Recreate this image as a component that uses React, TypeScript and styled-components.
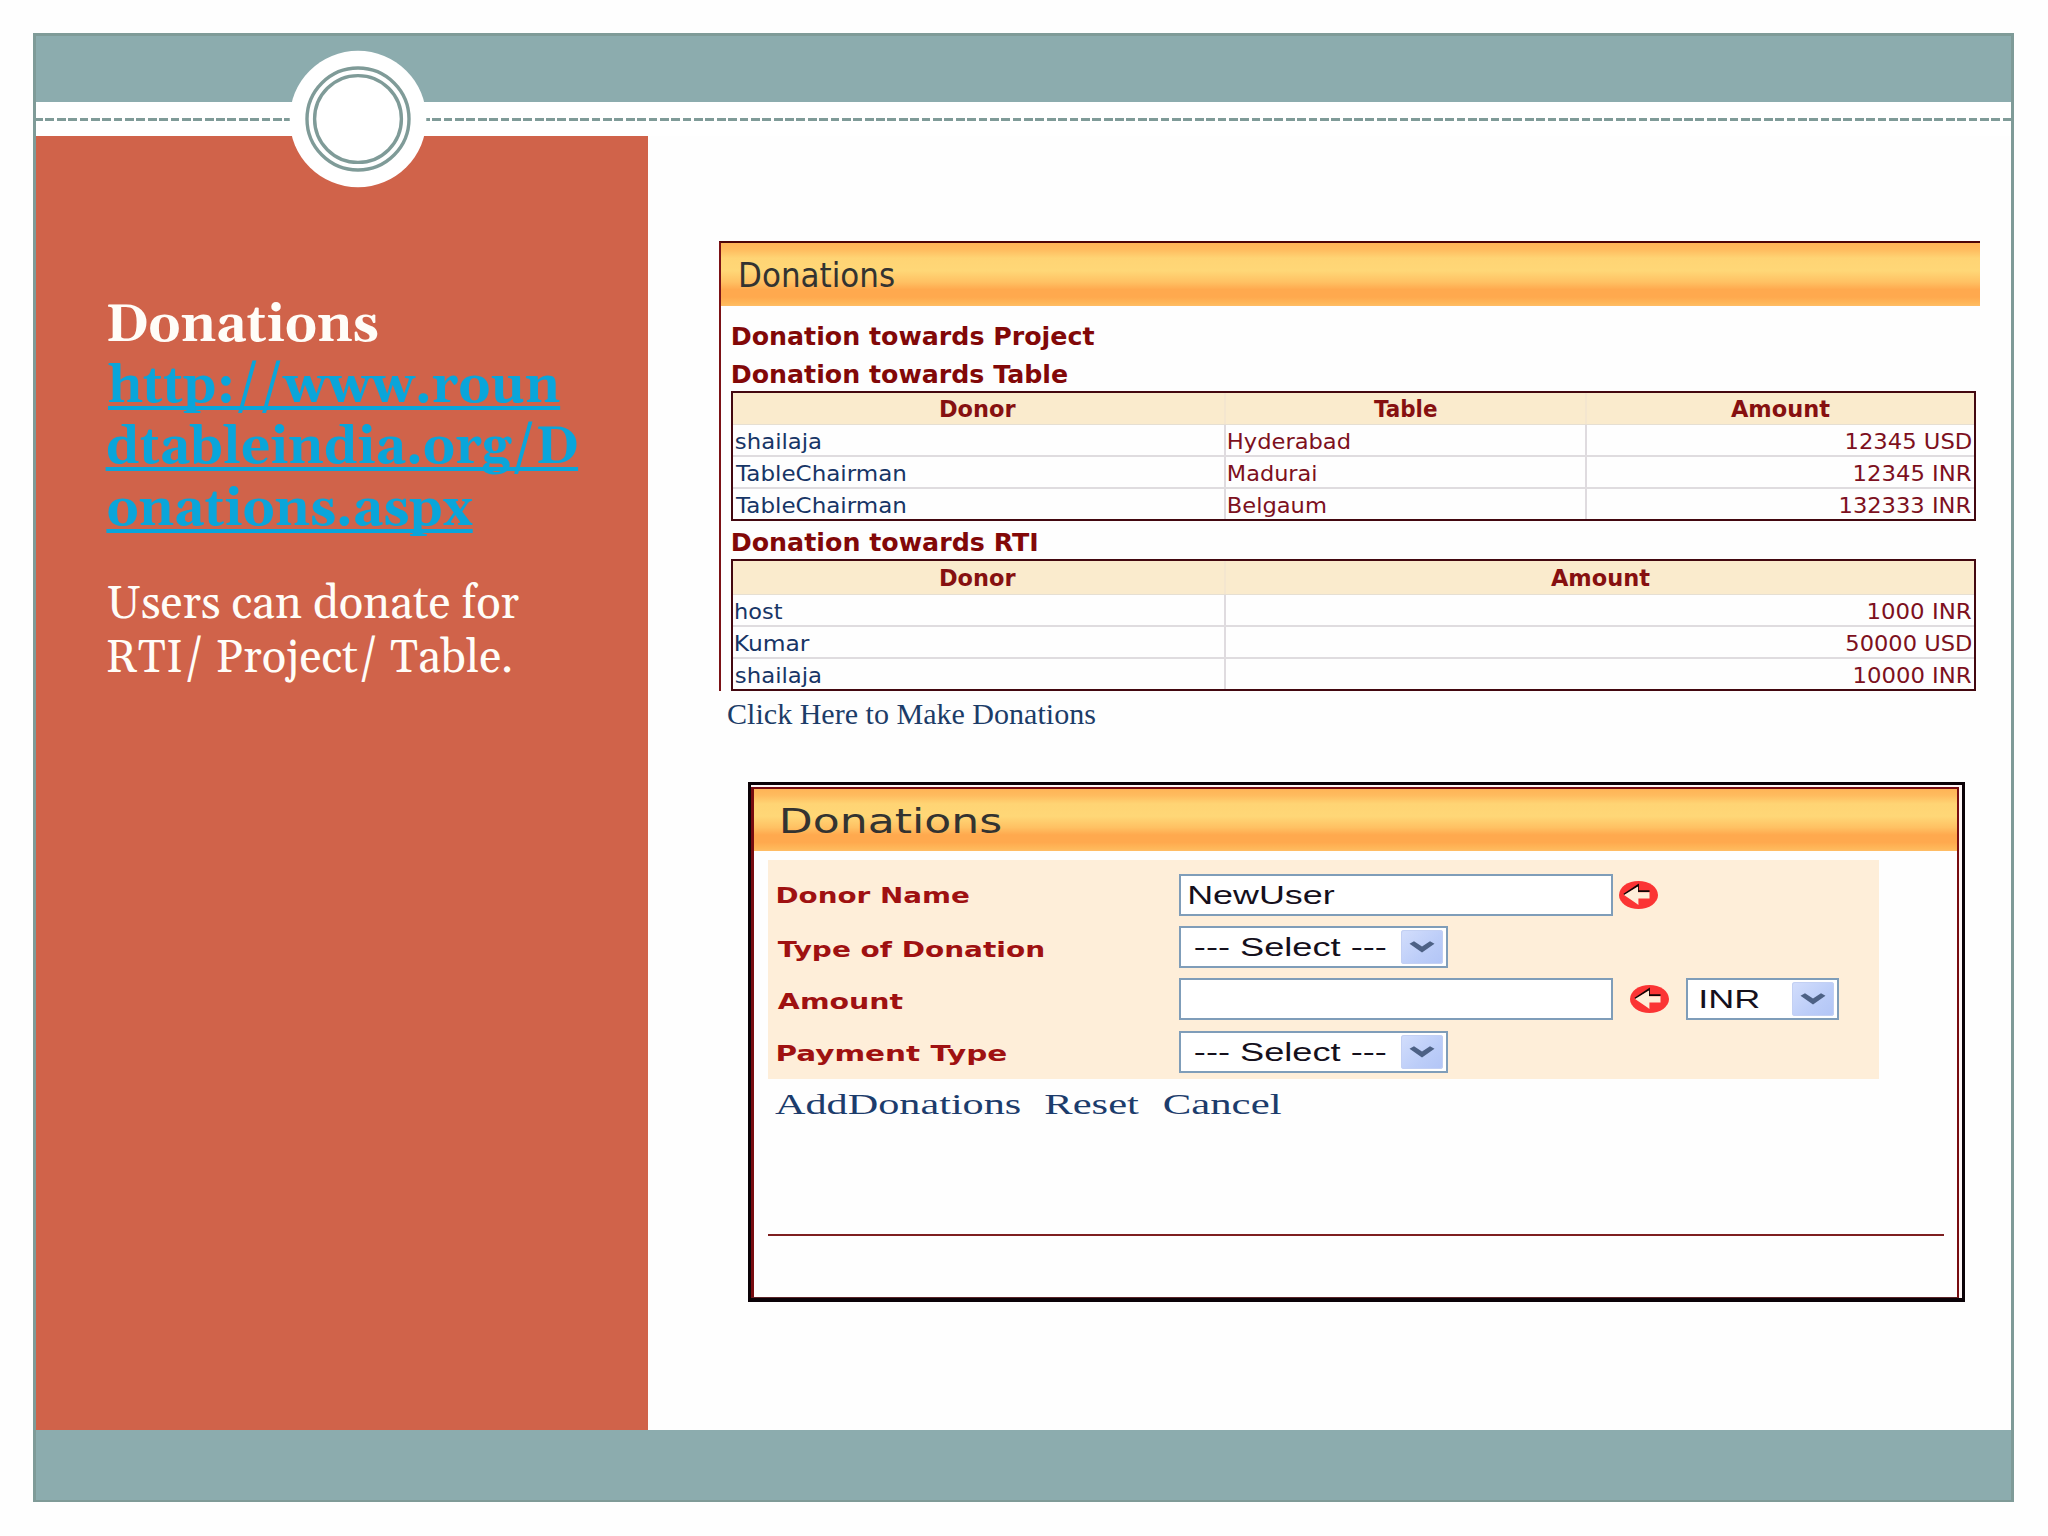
import React, { useLayoutEffect, useState } from "react";
import styled, { createGlobalStyle, css } from "styled-components";

const SANS = '"DejaVu Sans", Verdana, sans-serif';
const ARIAL = '"Liberation Sans", Arial, sans-serif';
const SERIF = '"Liberation Serif", "Times New Roman", serif';
const BOOK = 'Gelasio, "Liberation Serif", Georgia, serif';

const GlobalStyle = createGlobalStyle`
  *, *::before, *::after { box-sizing: border-box; }
  body { margin: 0; background: #fefefe; }
`;

/* ---------- text fitted to a given ink width ---------- */

const FitBox = styled.span<{ $w: number }>`
  display: block;
  flex: none;
  width: ${(p) => p.$w}px;
  white-space: pre;
`;

const FitInk = styled.span<{
  $font: string;
  $size: number;
  $bold?: boolean;
  $lh: number;
  $line?: boolean;
}>`
  display: inline-block;
  vertical-align: top;
  transform-origin: 0 50%;
  font-family: ${(p) => p.$font};
  font-size: ${(p) => p.$size}px;
  font-weight: ${(p) => (p.$bold ? 700 : 400)};
  line-height: ${(p) => p.$lh}px;
  ${(p) =>
    p.$line &&
    css`
      text-decoration: underline;
      text-decoration-thickness: 4px;
      text-underline-offset: 4px;
      text-decoration-skip-ink: none;
    `}
`;

type FitProps = {
  children: string;
  w: number;
  size: number;
  font?: string;
  bold?: boolean;
  lh?: number;
  line?: boolean;
};

/* measuring at ten times the size keeps the ink bounds free of rounding */
const ZOOM = 10;

function Fit({ children, w, size, font = SANS, bold, lh = 30, line }: FitProps) {
  const [t, setT] = useState("none");
  useLayoutEffect(() => {
    const ctx = document.createElement("canvas").getContext("2d");
    if (!ctx) return;
    ctx.font = `${bold ? 700 : 400} ${size * ZOOM}px ${font}`;
    const m = ctx.measureText(children);
    const left = m.actualBoundingBoxLeft / ZOOM;
    const right = m.actualBoundingBoxRight / ZOOM;
    const k = w / (left + right);
    setT(`translateX(${left * k}px) scaleX(${k})`);
  }, [children, w, size, font, bold]);
  return (
    <FitBox $w={w}>
      <FitInk $font={font} $size={size} $bold={bold} $lh={lh} $line={line} style={{ transform: t }}>
        {children}
      </FitInk>
    </FitBox>
  );
}

/* ---------- slide ---------- */

const Slide = styled.main`
  width: 2048px;
  height: 1536px;
  padding: 33px 34px 34px 33px;
  background: #fefefe;
  overflow: hidden;
`;

const Frame = styled.div`
  position: relative;
  display: flex;
  flex-direction: column;
  width: 1981px;
  height: 1469px;
  border: 3px solid #7f9b98;
  border-bottom-width: 2px;
`;

const Band = styled.div<{ $h: number }>`
  flex: none;
  height: ${(p) => p.$h}px;
  background: #8cacae;
`;

const Strip = styled.div`
  flex: none;
  display: flex;
  align-items: center;
  height: 34px;
  background: #fff;
`;

const Dashes = styled.div`
  width: 100%;
  height: 3px;
  margin-top: 1px;
  background: repeating-linear-gradient(90deg, #7f9b98 0 8.8px, #fff 8.8px 11.38px);
  background-position-x: -2px;
`;

const Medallion = styled.svg`
  position: absolute;
  left: 252.3px;
  top: 13.3px;
  width: 140px;
  height: 140px;
`;

const Body = styled.div`
  flex: 1;
  display: flex;
  min-height: 0;
`;

const Sidebar = styled.aside`
  flex: none;
  width: 612px;
  padding: 158.5px 0 0 71.5px;
  background: #d0634a;
  color: #fffdf8;
`;

const Title = styled.h1`
  margin: 0 0 37.5px;
`;

const TitleLink = styled.a`
  display: block;
  color: #0aa5da;
`;

const Copy = styled.p`
  margin: 0;
`;

const Content = styled.section`
  flex: 1;
  display: flex;
  flex-direction: column;
  padding: 105px 0 0 71px;
`;

/* ---------- shared panel parts ---------- */

const PanelHeader = styled.header<{ $h: number; $pad: number }>`
  flex: none;
  display: flex;
  align-items: center;
  height: ${(p) => p.$h}px;
  padding: 2px 0 0 ${(p) => p.$pad}px;
  color: #333331;
  background: linear-gradient(
    180deg,
    #ffb456 0%,
    #ffbb5e 10%,
    #ffd474 24%,
    #ffd777 44%,
    #ffc163 62%,
    #ffa94e 74%,
    #ffa94e 86%,
    #ffb85a 96%,
    #ffbd66 100%
  );
`;

/* ---------- listing panel ---------- */

const Listing = styled.div`
  flex: none;
  width: 1261px;
  height: 450px;
  border-top: 2px solid #4d0508;
  border-left: 2px solid #7b1216;
`;

const Lists = styled.div`
  padding: 14px 4px 0 10px;
`;

const Heading = styled.h2<{ $mt?: number; $h?: number; $pt?: number }>`
  margin: ${(p) => p.$mt ?? 0}px 0 0 1.5px;
  padding-top: ${(p) => p.$pt ?? 1}px;
  height: ${(p) => p.$h ?? 33}px;
  color: #820808;
`;

const Grid = styled.div`
  border: 2px solid #430810;
  width: 1245px;
`;

const Row = styled.div<{ $cols: string; $h: number; $head?: boolean }>`
  display: grid;
  grid-template-columns: ${(p) => p.$cols};
  height: ${(p) => p.$h}px;
  background: ${(p) => (p.$head ? "#faebcd" : "transparent")};
  border-bottom: ${(p) => (p.$head ? "1px solid #e6dfd2" : "2px solid #dfdcdf")};
  &:last-child {
    border-bottom: 0;
  }
`;

const Cell = styled.div<{ $align?: string; $tone?: string; $head?: boolean }>`
  display: flex;
  align-items: center;
  justify-content: ${(p) => p.$align ?? "flex-start"};
  padding: ${(p) => (p.$head ? "1px 0 0 0" : "4px 3.5px 0 3px")};
  color: ${(p) => p.$tone ?? "#7d1020"};
  border-right: 2px solid ${(p) => (p.$head ? "#f4e6cf" : "#dfdbdf")};
  &:last-child {
    border-right: 0;
  }
`;

const MakeLink = styled.a`
  display: block;
  margin: 7px 0 0 9px;
  color: #1c3c68;
`;

/* ---------- form panel ---------- */

const FormOuter = styled.div`
  flex: none;
  width: 1217px;
  height: 519.5px;
  margin: 53px 0 0 29px;
  padding: 2px 3px 0 0;
  border: 3px solid #0b0207;
  border-bottom-width: 4px;
  background: #fff6f6;
`;

const FormInner = styled.div`
  display: flex;
  flex-direction: column;
  height: 100%;
  border: 2px solid #780c10;
  border-left-width: 3px;
  border-bottom: 1px solid #5c2428;
  background: #fefefe;
`;

const Fields = styled.div`
  flex: none;
  display: flex;
  flex-direction: column;
  gap: 10.2px;
  width: 1111px;
  height: 219px;
  margin: 9.5px 0 0 14px;
  padding-top: 14px;
  background: #feeed9;
`;

const Field = styled.div`
  display: flex;
  align-items: center;
  height: 42px;
`;

const Label = styled.div<{ $shift?: number }>`
  flex: none;
  width: 411px;
  padding: ${(p) => p.$shift ?? 2}px 0 0 9.5px;
  color: #9f1111;
`;

const Control = styled.div<{ $w: number; $pad: number; $ml?: number }>`
  display: flex;
  flex: none;
  align-items: center;
  justify-content: space-between;
  width: ${(p) => p.$w}px;
  height: 42px;
  margin-left: ${(p) => p.$ml ?? 0}px;
  padding: 0 3px 0 ${(p) => p.$pad}px;
  border: 2px solid #7f9db9;
  background: #fff;
  color: #15101c;
`;

const DropButton = styled.span`
  display: flex;
  align-items: center;
  justify-content: center;
  width: 42px;
  height: 34px;
  border-radius: 3px;
  background: linear-gradient(135deg, #d3defc 0%, #bccdf8 60%, #b2c5f6 100%);
  box-shadow: inset 0 0 0 1px #c3d0f3;
`;

const Badge = styled.svg<{ $ml: number }>`
  flex: none;
  width: 39px;
  height: 28px;
  margin-left: ${(p) => p.$ml}px;
`;

const Actions = styled.nav`
  display: flex;
  gap: 25px;
  margin: 8.5px 0 0 21px;
  color: #1c3c6c;
`;

const Rule = styled.div`
  flex: none;
  width: 1176px;
  height: 2px;
  margin: auto 0 61px 14px;
  background: #7e1f20;
`;

function Drop() {
  return (
    <DropButton>
      <svg width="26" height="14" viewBox="0 0 26 14">
        <path
          d="M0.5 3.8 L5 1.2 L13 6.6 L21 1.2 L25.5 3.8 L13 12.4 Z"
          fill="#4d6185"
        />
      </svg>
    </DropButton>
  );
}

function Required({ ml }: { ml: number }) {
  return (
    <Badge $ml={ml} viewBox="0 0 39 28">
      <ellipse cx="19.5" cy="14" rx="19.5" ry="14" fill="#fb3434" />
      <path d="M5 13.4 L19 4.2 V10.2 H30.5" fill="none" stroke="#100606" strokeWidth="1.8" />
      <path d="M5 14 L19 5.4 V11.2 H30.5 V17.6 H19.4 V24 L17.5 22.5 Z" fill="#feeed9" />
    </Badge>
  );
}

type Entry = { t: string; w: number };
const NAVY = "#173566";

function ListTable({
  cols,
  head,
  rows,
  headH,
  heights,
}: {
  cols: string;
  head: Entry[];
  rows: Entry[][];
  headH: number;
  heights: number[];
}) {
  return (
    <Grid>
      <Row $cols={cols} $h={headH} $head>
        {head.map((h, i) => (
          <Cell key={i} $align="center" $head $tone="#861010">
            <Fit w={h.w} size={23} bold>
              {h.t}
            </Fit>
          </Cell>
        ))}
      </Row>
      {rows.map((r, i) => (
        <Row key={i} $cols={cols} $h={heights[i]}>
          {r.map((c, j) => (
            <Cell
              key={j}
              $align={j === r.length - 1 ? "flex-end" : "flex-start"}
              $tone={j === 0 ? NAVY : undefined}
            >
              <Fit w={c.w} size={22} lh={26}>
                {c.t}
              </Fit>
            </Cell>
          ))}
        </Row>
      ))}
    </Grid>
  );
}

export default function App() {
  return (
    <>
      <GlobalStyle />
      <Slide>
        <Frame>
          <Band $h={66} />
          <Strip>
            <Dashes />
          </Strip>
          <Body>
            <Sidebar>
              <Title>
                <Fit font={BOOK} size={53} bold lh={61.4} w={270}>
                  Donations
                </Fit>
                <TitleLink>
                  <Fit font={BOOK} size={53} bold lh={61.4} w={452} line>
                    http://www.roun
                  </Fit>
                  <Fit font={BOOK} size={53} bold lh={61.4} w={469} line>
                    dtableindia.org/D
                  </Fit>
                  <Fit font={BOOK} size={53} bold lh={61.4} w={365} line>
                    onations.aspx
                  </Fit>
                </TitleLink>
              </Title>
              <Copy>
                <Fit font={BOOK} size={46} lh={54.6} w={411}>
                  Users can donate for
                </Fit>
                <Fit font={BOOK} size={46} lh={54.6} w={403}>
                  RTI/ Project/ Table.
                </Fit>
              </Copy>
            </Sidebar>
            <Content>
              <Listing>
                <PanelHeader $h={62.5} $pad={20}>
                  <Fit w={153} size={34} lh={40}>
                    Donations
                  </Fit>
                </PanelHeader>
                <Lists>
                  <Heading>
                    <Fit w={361} size={24} bold lh={33}>
                      Donation towards Project
                    </Fit>
                  </Heading>
                  <Heading $mt={5}>
                    <Fit w={334} size={24} bold lh={33}>
                      Donation towards Table
                    </Fit>
                  </Heading>
                  <ListTable
                    cols="493px 361px 1fr"
                    headH={32}
                    heights={[32.5, 31.5, 30]}
                    head={[
                      { t: "Donor", w: 74.5 },
                      { t: "Table", w: 62.5 },
                      { t: "Amount", w: 98.5 },
                    ]}
                    rows={[
                      [
                        { t: "shailaja", w: 84 },
                        { t: "Hyderabad", w: 120 },
                        { t: "12345 USD", w: 124 },
                      ],
                      [
                        { t: "TableChairman", w: 169 },
                        { t: "Madurai", w: 86.5 },
                        { t: "12345 INR", w: 116 },
                      ],
                      [
                        { t: "TableChairman", w: 169 },
                        { t: "Belgaum", w: 96 },
                        { t: "132333 INR", w: 129.5 },
                      ],
                    ]}
                  />
                  <Heading $mt={6} $h={32} $pt={0}>
                    <Fit w={303.5} size={24} bold lh={33}>
                      Donation towards RTI
                    </Fit>
                  </Heading>
                  <ListTable
                    cols="493px 1fr"
                    headH={34.5}
                    heights={[32, 31.5, 30]}
                    head={[
                      { t: "Donor", w: 74.5 },
                      { t: "Amount", w: 98.5 },
                    ]}
                    rows={[
                      [
                        { t: "host", w: 46 },
                        { t: "1000 INR", w: 102 },
                      ],
                      [
                        { t: "Kumar", w: 73.5 },
                        { t: "50000 USD", w: 124 },
                      ],
                      [
                        { t: "shailaja", w: 84 },
                        { t: "10000 INR", w: 116 },
                      ],
                    ]}
                  />
                </Lists>
              </Listing>
              <MakeLink>
                <Fit font={SERIF} size={30} w={367} lh={31}>
                  Click Here to Make Donations
                </Fit>
              </MakeLink>
              <FormOuter>
                <FormInner>
                  <PanelHeader $h={61.5} $pad={28.5}>
                    <Fit w={217.5} size={34} lh={40}>
                      Donations
                    </Fit>
                  </PanelHeader>
                  <Fields>
                    <Field>
                      <Label>
                        <Fit w={190.5} size={21.5} bold>
                          Donor Name
                        </Fit>
                      </Label>
                      <Control $w={433.5} $pad={8.5}>
                        <Fit font={ARIAL} w={144.5} size={26}>
                          NewUser
                        </Fit>
                      </Control>
                      <Required ml={6} />
                    </Field>
                    <Field>
                      <Label $shift={5}>
                        <Fit w={265} size={21.5} bold>
                          Type of Donation
                        </Fit>
                      </Label>
                      <Control $w={268.5} $pad={13.5}>
                        <Fit font={ARIAL} w={190.5} size={26}>
                          --- Select ---
                        </Fit>
                        <Drop />
                      </Control>
                    </Field>
                    <Field>
                      <Label $shift={5}>
                        <Fit w={124.5} size={21.5} bold>
                          Amount
                        </Fit>
                      </Label>
                      <Control $w={433.5} $pad={7} />
                      <Required ml={17} />
                      <Control $w={153.5} $pad={13.5} $ml={17}>
                        <Fit font={ARIAL} w={58} size={26}>
                          INR
                        </Fit>
                        <Drop />
                      </Control>
                    </Field>
                    <Field>
                      <Label $shift={5}>
                        <Fit w={228} size={21.5} bold>
                          Payment Type
                        </Fit>
                      </Label>
                      <Control $w={268.5} $pad={13.5}>
                        <Fit font={ARIAL} w={190.5} size={26}>
                          --- Select ---
                        </Fit>
                        <Drop />
                      </Control>
                    </Field>
                  </Fields>
                  <Actions>
                    <Fit font={SERIF} w={245} size={30} lh={31}>
                      AddDonations
                    </Fit>
                    <Fit font={SERIF} w={94} size={30} lh={31}>
                      Reset
                    </Fit>
                    <Fit font={SERIF} w={117} size={30} lh={31}>
                      Cancel
                    </Fit>
                  </Actions>
                  <Rule />
                </FormInner>
              </FormOuter>
            </Content>
          </Body>
          <Band $h={70} />
          <Medallion viewBox="-70 -70 140 140">
            <circle r="68.3" fill="#fff" />
            <circle r="51" fill="none" stroke="#7f9b98" strokeWidth="3.4" />
            <circle r="43.4" fill="none" stroke="#7f9b98" strokeWidth="3.4" />
          </Medallion>
        </Frame>
      </Slide>
    </>
  );
}
